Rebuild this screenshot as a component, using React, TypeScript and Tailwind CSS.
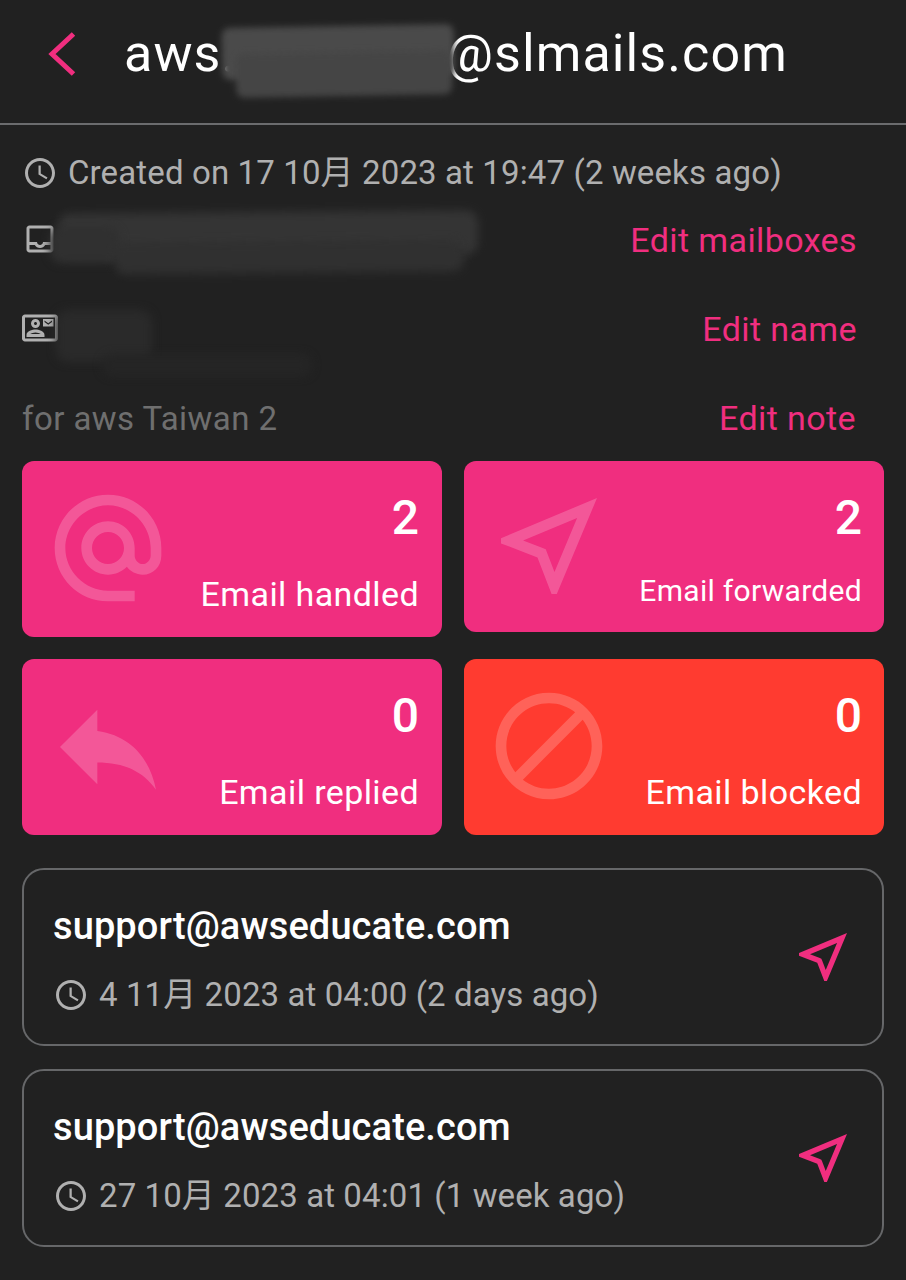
import React from "react";

const paths = {
  clock:
    "M11.99 2C6.47 2 2 6.48 2 12s4.47 10 9.99 10C17.52 22 22 17.52 22 12S17.52 2 11.99 2zM12 20c-4.42 0-8-3.58-8-8s3.58-8 8-8 8 3.58 8 8-3.58 8-8 8zm.5-13H11v6l5.25 3.15.75-1.23-4.5-2.67z",
  inbox:
    "M19 3H5c-1.1 0-2 .9-2 2v14c0 1.1.9 2 2 2h14c1.1 0 2-.9 2-2V5c0-1.1-.9-2-2-2zm0 16H5v-3h3.56c.69 1.19 1.97 2 3.45 2s2.75-.81 3.44-2H19v3zm0-5h-4.99c0 1.1-.9 2-2 2s-2-.9-2-2H5V5h14v9z",
  contact:
    "M22 3H2C.9 3 0 3.9 0 5v14c0 1.1.9 2 2 2h20c1.1 0 1.99-.9 1.99-2L24 5c0-1.1-.9-2-2-2zm0 16H2V5h20v14zM21 6h-7v5h7V6zm-1 2l-2.5 1.75L15 8V7l2.5 1.75L20 7v1zM9 12c1.65 0 3-1.35 3-3s-1.35-3-3-3-3 1.35-3 3 1.35 3 3 3zm0-4c.55 0 1 .45 1 1s-.45 1-1 1-1-.45-1-1 .45-1 1-1zm6 8.59c0-2.5-3.97-3.58-6-3.58s-6 1.08-6 3.58V18h12v-1.41zM5.48 16c.74-.5 2.22-1 3.52-1s2.77.49 3.52 1H5.48z",
  at: "M12 2C6.48 2 2 6.48 2 12s4.48 10 10 10h5v-2h-5c-4.34 0-8-3.66-8-8s3.66-8 8-8 8 3.66 8 8v1.43c0 .79-.71 1.57-1.5 1.57s-1.5-.78-1.5-1.57V12c0-2.76-2.24-5-5-5s-5 2.24-5 5 2.24 5 5 5c1.38 0 2.64-.56 3.54-1.47.65.89 1.77 1.47 2.96 1.47 1.97 0 3.5-1.6 3.5-3.57V12c0-5.52-4.48-10-10-10zm0 13c-1.66 0-3-1.34-3-3s1.34-3 3-3 3 1.34 3 3-1.34 3-3 3z",
  send: "M17.27 6.73l-4.24 10.13-1.32-3.42-.32-.83-.82-.32-3.43-1.33 10.13-4.23M21 3L3 10.53v.98l6.84 2.65L12.48 21h.98L21 3z",
  reply: "M10 9V5l-7 7 7 7v-4.1c5 0 8.5 1.6 11 5.1-1-5-4-10-11-11z",
  block:
    "M12 2C6.48 2 2 6.48 2 12s4.48 10 10 10 10-4.48 10-10S17.52 2 12 2zM4 12c0-4.42 3.58-8 8-8 1.85 0 3.55.63 4.9 1.69L5.69 16.9C4.63 15.55 4 13.85 4 12zm8 8c-1.85 0-3.55-.63-4.9-1.69L18.31 7.1C19.37 8.45 20 10.15 20 12c0 4.42-3.58 8-8 8z",
};

const Icon = ({ d, className }: { d: string; className: string }) => (
  <svg viewBox="0 0 24 24" fill="currentColor" className={className}>
    <path d={d} />
  </svg>
);

const StatCard = ({
  icon,
  count,
  label,
  className,
  labelClass,
  iconClass,
}: {
  icon: string;
  count: number;
  label: string;
  className: string;
  labelClass: string;
  iconClass: string;
}) => (
  <div className={`relative rounded-xl text-white pt-[25px] ${className}`}>
    <Icon d={icon} className={`absolute w-[128px] h-[128px] text-white/20 ${iconClass}`} />
    <div className="text-right text-[48px] leading-[64px] font-medium">{count}</div>
    <div className={`text-right ${labelClass}`}>{label}</div>
  </div>
);

const ActivityCard = ({ email, date }: { email: string; date: string }) => (
  <div className="h-[178px] rounded-[22px] border-2 border-[#666769] flex items-center justify-between pl-[29px] pr-[27px]">
    <div className="pt-[6px]">
      <div className="text-[38px] leading-[48px] font-medium tracking-[0.1px] text-white">{email}</div>
      <div className="mt-[21px] flex items-center text-[33px] leading-[48px] tracking-[0.1px] text-[#b0b0b0]">
        <Icon d={paths.clock} className="w-[36px] h-[36px] mr-[10px]" />
        {date}
      </div>
    </div>
    <Icon d={paths.send} className="w-[64px] h-[64px] text-[#f02e7f]" />
  </div>
);

export default function App() {
  return (
    <div className="w-[906px] h-[1280px] overflow-hidden bg-[#212121] font-['Roboto','Noto_Sans_CJK_SC',sans-serif]">
      <header className="h-[125px] border-b-2 border-[#6b6c6e] flex items-center pb-[15px]">
        <svg viewBox="0 0 28 44" fill="none" className="ml-[48px] w-[28px] h-[44px] text-[#f02e7f]">
          <path d="M25.5 2 4 22l21.5 20" stroke="currentColor" strokeWidth="5" />
        </svg>
        <div className="ml-[48px] flex items-center text-[52px] leading-[60px] tracking-[1.1px] text-white">
          <span>aws.</span>
          <span className="relative -ml-[14px] -mr-[8px] w-[232px] h-[70px] mt-[14px]">
            <span className="absolute left-0 top-0 w-[232px] h-[52px] -rotate-1 rounded-lg bg-[#4a4a4a] blur-[3px]" />
            <span className="absolute left-[14px] top-[26px] w-[216px] h-[44px] -rotate-1 rounded-lg bg-[#454545] blur-[3px]" />
          </span>
          <span>@slmails.com</span>
        </div>
      </header>

      <div className="px-[22px]">
        <div className="pt-[26px] flex items-center text-[33px] leading-[44px] tracking-[0.13px] text-[#b0b0b0]">
          <Icon d={paths.clock} className="w-[36px] h-[36px] mr-[10px]" />
          Created on 17 10月 2023 at 19:47 (2 weeks ago)
        </div>

        <div className="mt-[24px] h-[44px] flex items-center justify-between pr-[27px]">
          <div className="relative -mt-[5px]">
            <Icon d={paths.inbox} className="w-[36px] h-[36px] text-[#b0b0b0]" />
            <div className="absolute left-[36px] -top-[9px] w-[420px] h-[44px] -rotate-[0.5deg] rounded-xl bg-[#343434] blur-[4px]" />
            <div className="absolute left-[28px] top-[6px] w-[70px] h-[36px] rounded-xl bg-[#303030] blur-[4px]" />
            <div className="absolute left-[92px] top-[20px] w-[350px] h-[32px] -rotate-[0.5deg] rounded-xl bg-[#303030] blur-[4px]" />
          </div>
          <span className="pb-[2px] text-[34px] leading-[44px] tracking-[0.4px] text-[#f02e7f]">Edit mailboxes</span>
        </div>

        <div className="mt-[45px] h-[44px] flex items-center justify-between pr-[27px]">
          <div className="relative -mt-[5px]">
            <Icon d={paths.contact} className="w-[36px] h-[36px] text-[#b0b0b0]" />
            <div className="absolute left-[34px] top-0 w-[96px] h-[52px] rounded-xl bg-[#2a2a2a] blur-[4px]" />
            <div className="absolute left-[80px] top-[44px] w-[210px] h-[22px] rounded-xl bg-[#252525] blur-[4px]" />
          </div>
          <span className="pb-[2px] text-[34px] leading-[44px] tracking-[0.4px] text-[#f02e7f]">Edit name</span>
        </div>

        <div className="mt-[45px] h-[44px] flex items-center justify-between pr-[28px]">
          <span className="text-[33px] leading-[44px] tracking-[0.43px] text-[#6f6f6f]">for aws Taiwan 2</span>
          <span className="pb-[2px] text-[34px] leading-[44px] tracking-[0.4px] text-[#f02e7f]">Edit note</span>
        </div>

        <div className="mt-[20px] grid grid-cols-2 gap-x-[22px] gap-y-[22px] items-start">
          <StatCard
            icon={paths.at}
            count={2}
            label="Email handled"
            className="h-[176px] pr-[23px] bg-[#f02e7f]"
            labelClass="text-[34px] leading-[44px] tracking-[0.4px] mt-[22px]"
            iconClass="left-[22px] top-[23px]"
          />
          <StatCard
            icon={paths.send}
            count={2}
            label="Email forwarded"
            className="h-[171px] pr-[22px] bg-[#f02e7f]"
            labelClass="text-[30px] leading-[40px] tracking-[0.3px] mt-[21px]"
            iconClass="left-[21px] top-[21px]"
          />
          <StatCard
            icon={paths.reply}
            count={0}
            label="Email replied"
            className="h-[176px] pr-[23px] bg-[#f02e7f]"
            labelClass="text-[34px] leading-[44px] tracking-[0.4px] mt-[22px]"
            iconClass="left-[22px] top-[24px]"
          />
          <StatCard
            icon={paths.block}
            count={0}
            label="Email blocked"
            className="h-[176px] pr-[22px] bg-[#ff3b30]"
            labelClass="text-[34px] leading-[44px] tracking-[0.4px] mt-[22px]"
            iconClass="left-[21px] top-[23px]"
          />
        </div>

        <div className="mt-[33px] flex flex-col gap-[23px]">
          <ActivityCard email="support@awseducate.com" date="4 11月 2023 at 04:00 (2 days ago)" />
          <ActivityCard email="support@awseducate.com" date="27 10月 2023 at 04:01 (1 week ago)" />
        </div>
      </div>
    </div>
  );
}
